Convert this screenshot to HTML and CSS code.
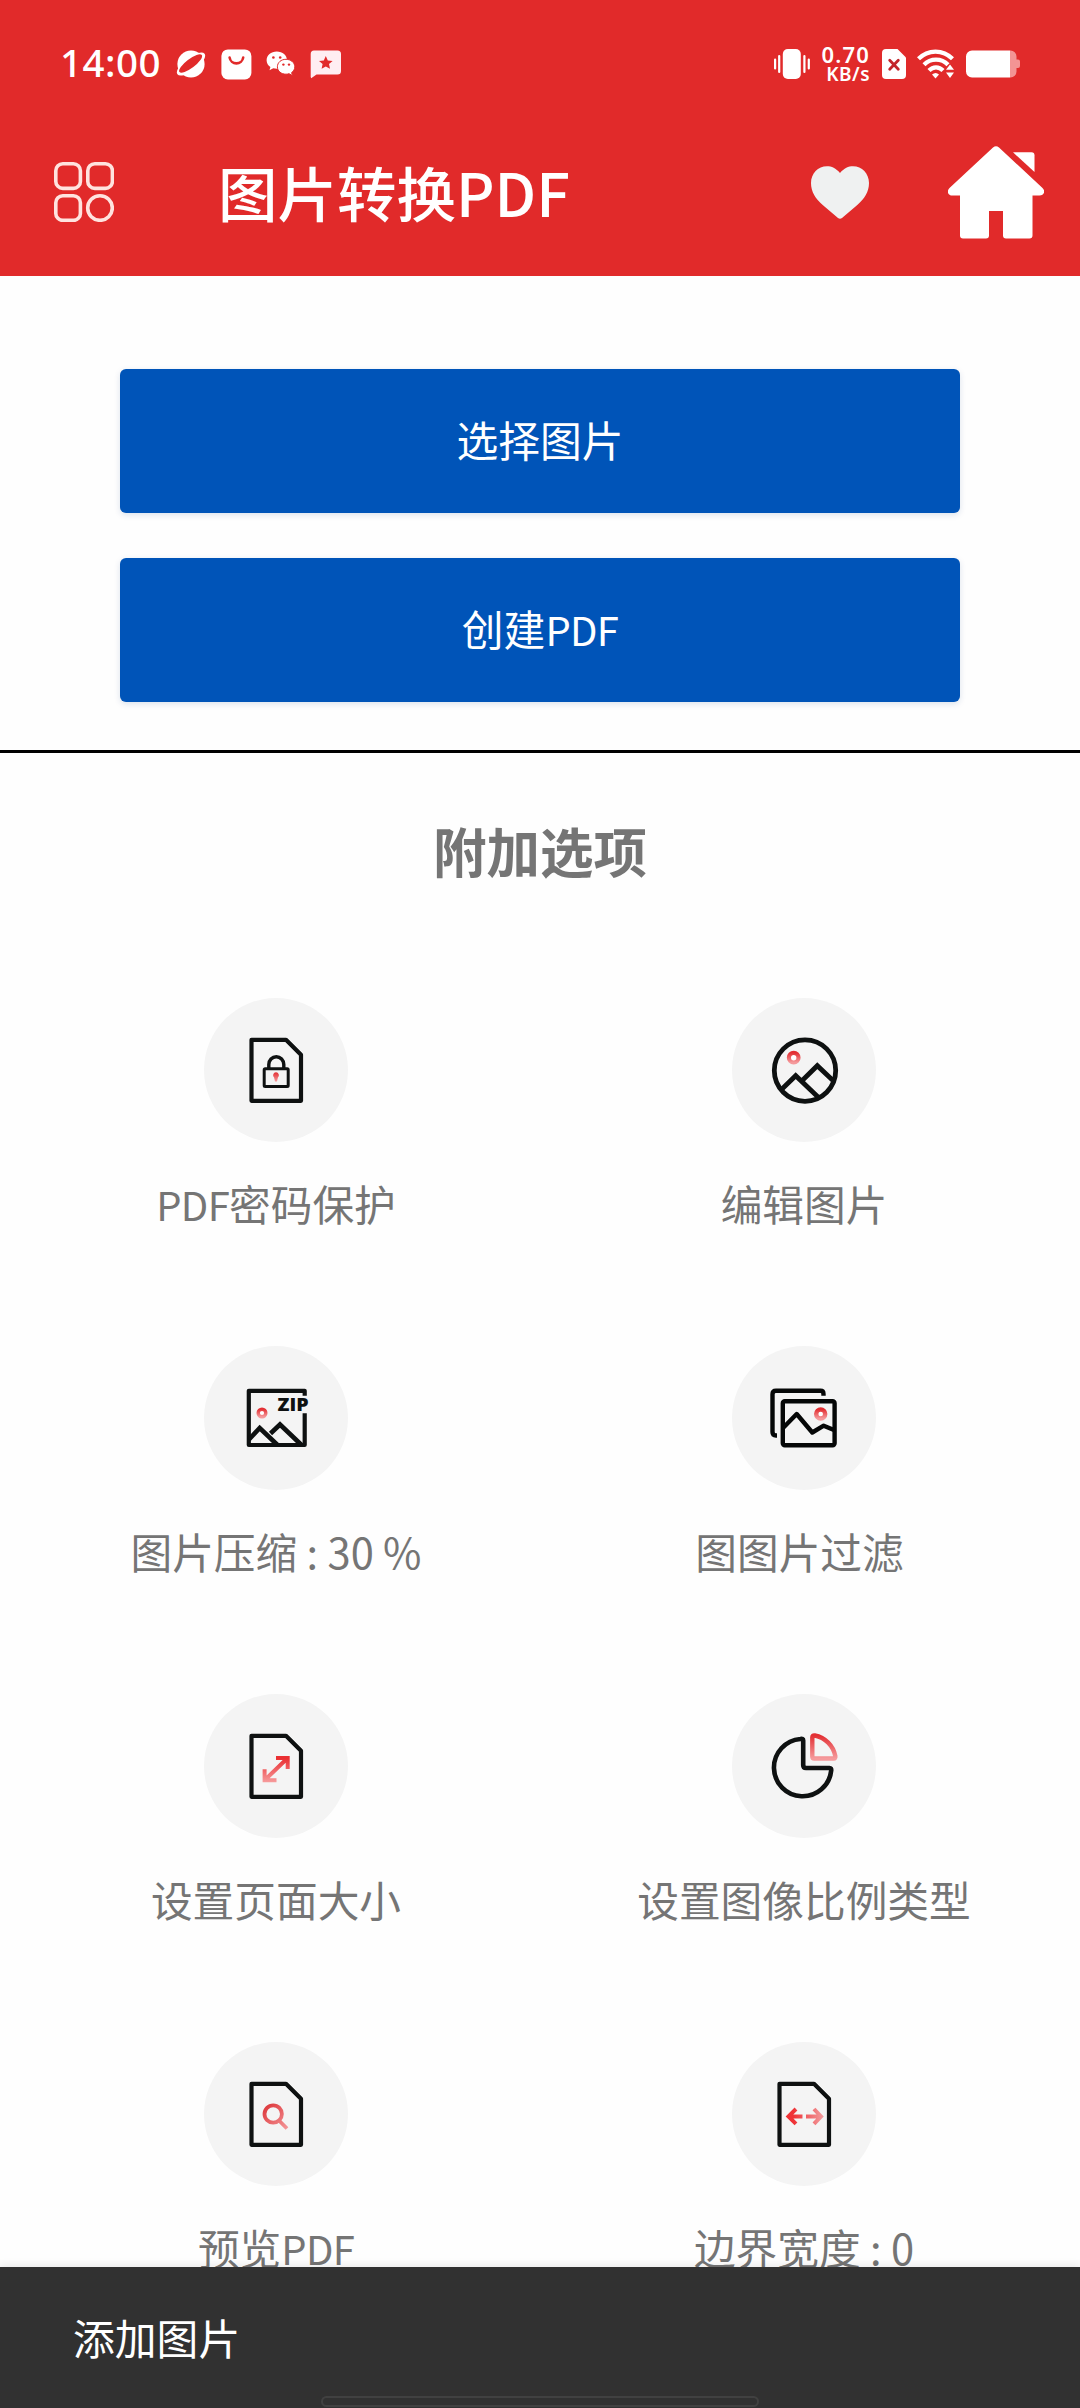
FILE: index.html
```html
<!DOCTYPE html>
<html lang="zh-CN">
<head>
<meta charset="utf-8">
<title>图片转换PDF</title>
<link rel="stylesheet" href="styles.css">
</head>
<body>
<svg class="defs" width="0" height="0" aria-hidden="true">
  <defs>
    <linearGradient id="fade-down" x1="0" y1="0" x2="0" y2="1">
      <stop offset="0" stop-color="#e32f33"/><stop offset="1" stop-color="#f59a9c"/>
    </linearGradient>
    <linearGradient id="resize-fade" gradientUnits="userSpaceOnUse" x1="0" y1="62" x2="0" y2="89">
      <stop offset="0.1" stop-color="#ea3033"/><stop offset="1" stop-color="#f79fa0"/>
    </linearGradient>
    <linearGradient id="width-fade" gradientUnits="userSpaceOnUse" x1="54" y1="0" x2="91" y2="0">
      <stop offset="0.2" stop-color="#ef3236"/><stop offset="1" stop-color="#f29a9c"/>
    </linearGradient>
    <linearGradient id="search-fade" gradientUnits="userSpaceOnUse" x1="60" y1="62" x2="84" y2="88">
      <stop offset="0" stop-color="#dc3236"/><stop offset="1" stop-color="#f59b9d"/>
    </linearGradient>
    <path id="sheet" d="M47.5 41.8H82L97 56.8V102.8H47.5Z" fill="none" stroke="#0e1111" stroke-width="4.2" stroke-linejoin="round"/>
  </defs>
</svg>

<div class="screen">
  <header class="top">
    <div class="status">
      <span class="clock">14:00</span>
      <svg class="st-planet" width="32" height="30" viewBox="0 0 32 30">
        <circle cx="16" cy="15" r="13.6" fill="#fff"/>
        <ellipse cx="16" cy="15" rx="17" ry="6.6" transform="rotate(-37 16 15)" fill="#fff"/>
        <ellipse cx="15.6" cy="14.5" rx="14" ry="4.5" transform="rotate(-37 15.6 14.5)" fill="#e12a2a"/>
      </svg>
      <svg class="st-bag" width="31" height="31" viewBox="0 0 31 31">
        <rect x=".4" y=".4" width="30" height="30" rx="6.5" fill="#fff"/>
        <path d="M8.6 8.6a6.9 6.9 0 0 0 13.6 0" fill="none" stroke="#e12a2a" stroke-width="2.6" stroke-linecap="round"/>
      </svg>
      <svg class="st-wechat" width="30" height="26" viewBox="0 0 30 26">
        <path d="M10.8.5C5 .5.6 4.400.6 9.200c0 2.900 1.500 5.200 3.800 6.800L3.500 19.200l3.800-2c1.200.3 2.300.5 3.500.5 5.600 0 10.200-3.600 10.200-8.500S16.600.5 10.800.5z" fill="#fff"/>
        <path d="M20 8.300c-5 0-8.600 3.300-8.600 7.500S15 23.200 20 23.200c1 0 2-.2 3-.5l3.500 1.900-.9-3c2-1.400 3.200-3.400 3.200-5.800 0-4.200-4-7.500-8.800-7.500z" fill="#fff" stroke="#e12a2a" stroke-width="1"/>
        <g fill="#e12a2a"><circle cx="7.400" cy="6.500" r="1.300"/><circle cx="14.200" cy="6.500" r="1.300"/><circle cx="17.400" cy="13.600" r="1.200"/><circle cx="23" cy="13.600" r="1.200"/></g>
      </svg>
      <svg class="st-chat" width="32" height="29" viewBox="0 0 32 29">
        <path d="M4 .5H27.500a3.500 3.500 0 0 1 3.500 3.500V21a3.500 3.500 0 0 1-3.500 3.500H6.500L1.200 28.300.7 27V4A3.500 3.500 0 0 1 4 .5z" fill="#ffeef2"/>
        <path d="M15.800 6l2 4.400 4.800.5-3.600 3.200 1 4.700-4.200-2.400-4.200 2.400 1-4.700L9 10.900l4.800-.5z" fill="#e12a2a"/>
      </svg>
      <span class="spacer"></span>
      <svg class="st-vibrate" width="38" height="32" viewBox="0 0 38 32">
        <rect x="8.800" y="1" width="18" height="30" rx="5" fill="#fff"/>
        <path d="M5.200 8v16M1.100 11.500v9M30.400 8v16M34.800 11.500v9" stroke="#fff" stroke-width="2.200" stroke-linecap="round"/>
      </svg>
      <span class="speed"><b class="rate">0.70</b><b class="unit">KB/s</b></span>
      <svg class="st-sim" width="24" height="30" viewBox="0 0 24 30">
        <path d="M4 0H15.500L24 8.500V26a4 4 0 0 1-4 4H4a4 4 0 0 1-4-4V4a4 4 0 0 1 4-4z" fill="#fff"/>
        <path d="M7.700 11.300l8.600 9M16.300 11.300l-8.600 9" stroke="#c3252b" stroke-width="2.800" stroke-linecap="round"/>
      </svg>
      <svg class="st-wifi" width="38" height="30" viewBox="0 0 38 30">
        <g fill="none" stroke="#fff" stroke-width="4.200">
          <path d="M1.500 9.800C11 .1 26 .1 35.500 9.800"/>
          <path d="M7 15.800c6.500-6.800 17.500-6.800 24 0"/>
          <path d="M12 21.500c4-4.300 10-4.300 14 0"/>
        </g>
        <path d="M15 25.500q3.700-3 7 0L18.500 29.500z" fill="#fff"/>
        <path d="M29 20.800L33 15.500 37 20.800zM29 23.500L33 29 37 23.500z" fill="#fff"/>
      </svg>
      <svg class="st-battery" width="54" height="28" viewBox="0 0 54 28">
        <path d="M44 .5h.5a6 6 0 0 1 6 6V9.500h1.500a2 2 0 0 1 2 2v4.500a2 2 0 0 1-2 2h-1.500v3.500a6 6 0 0 1-6 6H44z" fill="#f39494"/>
        <path d="M6 .5H44v27H6a6 6 0 0 1-6-6v-15a6 6 0 0 1 6-6z" fill="#fff"/>
      </svg>
    </div>
    <div class="appbar">
      <svg class="menu" width="60" height="60" viewBox="0 0 60 60" fill="none" stroke="#ffe3df" stroke-width="3.600">
        <rect x="1.800" y="1.800" width="24.600" height="24.600" rx="7"/>
        <rect x="33.800" y="1.800" width="24.600" height="24.600" rx="7"/>
        <rect x="1.800" y="33.800" width="24.600" height="24.600" rx="7"/>
        <circle cx="46" cy="46" r="12.300"/>
      </svg>
      <h1 class="title">图片转换<span class="latin">PDF</span></h1>
      <svg class="heart" width="58" height="53" viewBox="0 0 58 53">
        <path d="M29 7C33 2 37.500.2 42 .2 51 .2 58 7.500 58 17c0 9-4.500 15.500-12 22.300L31 52q-2 1.400-4 0L12 39.300C4.500 32.500 0 26 0 17 0 7.500 7 .2 16 .2 20.500.2 25 2 29 7z" fill="#eff1f1"/>
      </svg>
      <svg class="home" width="96" height="93" viewBox="0 0 96 93">
        <path d="M45 1.500q3-2.600 6 0L94.500 42c3.300 3.300 1.500 7.500-3 7.500H84.500V89.500q0 3-3 3H58q-3 0-3-3V65H41V89.500q0 3-3 3H15q-3 0-3-3V49.500H4.500C0 49.500-1.700 45.300 1.500 42z" fill="#fff"/>
        <path d="M65 6.300H83.500q3 0 3 3V26z" fill="#fff"/>
      </svg>
    </div>
  </header>

  <section class="actions">
    <button class="btn">选择图片</button>
    <button class="btn">创建<span class="latin">PDF</span></button>
  </section>

  <main class="options">
    <h2 class="heading">附加选项</h2>
    <div class="grid">
      <div class="item">
        <svg class="icon" viewBox="0 0 144 144">
          <use href="#sheet"/>
          <rect x="60.200" y="70.800" width="24" height="17.600" rx="1" fill="none" stroke="#0e1111" stroke-width="3"/>
          <path d="M64.800 70V66.500a7.500 7.800 0 0 1 15 0V70" fill="none" stroke="#0e1111" stroke-width="3.400"/>
          <path d="M72 74.300a2.900 2.900 0 0 1 1.900 5.100L73 83.500H71L70.100 79.400A2.900 2.900 0 0 1 72 74.300z" fill="url(#fade-down)"/>
        </svg>
        <span class="label"><span class="latin">PDF</span>密码保护</span>
      </div>
      <div class="item">
        <svg class="icon" viewBox="0 0 144 144">
          <g fill="none" stroke="#0e1111" stroke-width="4.800">
            <circle cx="73" cy="72.600" r="30.700"/>
            <path d="M49.500 91.500L63.700 77.700 86 99M70 82.800L85.300 67.700 101.500 83"/>
          </g>
          <circle cx="61.700" cy="59.700" r="4.800" fill="#fff" stroke="url(#fade-down)" stroke-width="4.200"/>
        </svg>
        <span class="label">编辑图片</span>
      </div>
      <div class="item">
        <svg class="icon" viewBox="0 0 144 144">
          <path d="M100.700 49.700V44.800H44.800V99H100.700V67.300" fill="none" stroke="#0e1111" stroke-width="4.200" stroke-linejoin="round"/>
          <path d="M45 93.500L55.700 82 73.500 99M66.500 87.500L76 78.500 97.500 99" fill="none" stroke="#0e1111" stroke-width="4.600"/>
          <circle cx="58" cy="67" r="3.800" fill="#fff" stroke="url(#fade-down)" stroke-width="3.400"/>
          <text class="zip" x="73.500" y="65.400" textLength="31" lengthAdjust="spacingAndGlyphs">ZIP</text>
        </svg>
        <span class="label">图片压缩 : 30 %</span>
      </div>
      <div class="item">
        <svg class="icon" viewBox="0 0 144 144">
          <g fill="none" stroke="#050707" stroke-width="4.400" stroke-linejoin="round">
            <path d="M45 89.500H44Q40.500 89.500 40.500 86V48.300Q40.500 44.800 44 44.800H88.500Q91.500 44.800 91.500 48V49.800"/>
            <rect x="50.800" y="55.200" width="51.800" height="44" rx="2"/>
            <path d="M51.500 81.500L64.700 68 80.300 86.500 91.700 79.700 102 84"/>
          </g>
          <circle cx="88.700" cy="68" r="4.500" fill="#fff" stroke="url(#fade-down)" stroke-width="4.400"/>
        </svg>
        <span class="label label-filter">图图片过滤</span>
      </div>
      <div class="item">
        <svg class="icon" viewBox="0 0 144 144">
          <use href="#sheet"/>
          <path d="M72 64H83.700V75M83.700 64L60.600 86.300M60.600 75.300V86.300H72.500" fill="none" stroke="url(#resize-fade)" stroke-width="4"/>
        </svg>
        <span class="label">设置页面大小</span>
      </div>
      <div class="item">
        <svg class="icon" viewBox="0 0 144 144">
          <path d="M71.200 46.500V71Q71.200 74 74 74H97.500Q99.500 74 99.200 76.500A28.700 28.700 0 1 1 68.500 45Q71.200 44.500 71.200 46.500Z" fill="none" stroke="#0e1111" stroke-width="4.600"/>
          <path d="M80.300 43.500V62.500Q80.300 64.500 82.300 64.500H101.500Q103.800 64.500 103.300 62A26 26 0 0 0 82.800 41.500Q80.300 41 80.300 43.500Z" fill="none" stroke="url(#fade-down)" stroke-width="4.400"/>
        </svg>
        <span class="label">设置图像比例类型</span>
      </div>
      <div class="item">
        <svg class="icon" viewBox="0 0 144 144">
          <use href="#sheet"/>
          <g fill="none" stroke="url(#search-fade)" stroke-width="3.800"><circle cx="69.200" cy="72" r="8.700"/><path d="M74.500 78L83 86.500"/></g>
        </svg>
        <span class="label">预览<span class="latin">PDF</span></span>
      </div>
      <div class="item">
        <svg class="icon" viewBox="0 0 144 144">
          <use href="#sheet"/>
          <path d="M64 67L56.500 74.400 64 81.800M56.500 74.300L70.500 74.400M82 67L89 74.400 82 81.800M89 74.300L74 74.400" fill="none" stroke="url(#width-fade)" stroke-width="4"/>
        </svg>
        <span class="label">边界宽度 : 0</span>
      </div>
    </div>
  </main>

  <footer class="snackbar">
    <span class="snack-text">添加图片</span>
    <span class="gesture"></span>
  </footer>
</div>
</body>
</html>
```
FILE: styles.css
```css
* { box-sizing: border-box; }

body {
  margin: 0;
  background: #fefefe;
  font-family: "Noto Sans CJK SC", "Noto Sans", sans-serif;
}

.defs { position: absolute; }

.screen {
  width: 1080px;
  height: 2408px;
  display: flex;
  flex-direction: column;
  overflow: hidden;
}

.top {
  flex: none;
  height: 276px;
  background: #e12a2a;
  color: #fff;
}

.status {
  height: 128px;
  padding: 0 60px;
  display: flex;
  align-items: center;
}

.clock {
  width: 115px;
  padding-bottom: 3px;
  font: 500 38.5px/1 "Noto Sans", sans-serif;
  letter-spacing: 0.5px;
}

.st-bag { margin-left: 14px; }
.st-wechat { margin-left: 14px; }
.st-chat { margin-left: 14px; }
.spacer { flex: 1; }

.speed {
  width: 48px;
  margin: 0 12px 0 10px;
  display: flex;
  flex-direction: column;
  align-items: flex-end;
  font-family: "Noto Sans", sans-serif;
}

.rate { font-size: 22px; line-height: 19px; font-weight: 600; letter-spacing: 1.2px; }
.unit { font-size: 19px; line-height: 20px; font-weight: 600; letter-spacing: 0.5px; }

.st-wifi { margin-left: 11px; }
.st-battery { margin-left: 11px; }

.appbar {
  height: 128px;
  padding: 0 36px 0 54px;
  display: flex;
  align-items: center;
}

.title {
  flex: 1;
  margin: -3px 0 0 104px;
  font-size: 59.5px;
  line-height: 80px;
  font-weight: 500;
}

.home { margin-left: 79px; }

.actions {
  flex: none;
  height: 477px;
  padding: 93px 120px 0;
  border-bottom: 3px solid #000;
  display: flex;
  flex-direction: column;
  gap: 45px;
}

.btn {
  height: 144px;
  padding: 0 0 4px;
  border: 0;
  border-radius: 6px;
  background: #0054b8;
  box-shadow: 0 2px 6px rgba(0, 60, 130, 0.14);
  color: #fff;
  font: 400 41.8px/60px "Noto Sans CJK SC", sans-serif;
}

.btn .latin,
.label .latin {
  font-size: 40px;
  letter-spacing: -0.7px;
}

.options {
  flex: 1;
  min-height: 0;
  overflow: hidden;
  color: #757575;
}

.heading {
  margin: 57px 0 0;
  font-size: 53.5px;
  line-height: 80px;
  font-weight: 700;
  text-align: center;
}

.grid {
  margin-top: 108px;
  padding: 0 12px;
  display: grid;
  grid-template-columns: 1fr 1fr;
  grid-auto-rows: 348px;
}

.item {
  display: flex;
  flex-direction: column;
  align-items: center;
}

.icon {
  width: 144px;
  height: 144px;
  border-radius: 50%;
  background: #f4f4f4;
}

.zip {
  font: 800 18px "Open Sans", sans-serif;
  fill: #0e1111;
}

.label {
  margin-top: 31px;
  font-size: 41.7px;
  line-height: 60px;
  white-space: nowrap;
}

.label-filter { padding-right: 9px; }

.snackbar {
  flex: none;
  height: 141px;
  padding: 40px 73px 1px;
  display: flex;
  flex-direction: column;
  justify-content: space-between;
  background: #313131;
  color: #fff;
  box-shadow: 0 -2px 8px rgba(0, 0, 0, 0.08);
}

.snack-text { font-size: 41.8px; line-height: 60px; }

.gesture {
  align-self: center;
  width: 438px;
  height: 11px;
  border: 2px solid #414141;
  border-radius: 6px;
}
```
